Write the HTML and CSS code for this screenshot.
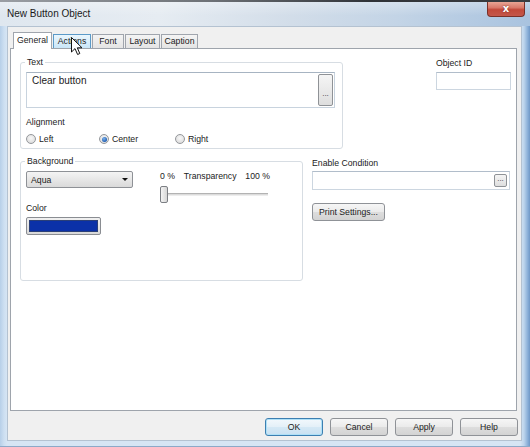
FILE: index.html
```html
<!DOCTYPE html>
<html>
<head>
<meta charset="utf-8">
<title>New Button Object</title>
<link rel="stylesheet" href="styles.css">
</head>
<body>
<div class="window">
  <div class="titlebar">
    <span class="title-text">New Button Object</span>
    <div class="close-btn"><span class="close-x">x</span></div>
  </div>
  <div class="client">
    <div class="tabs">
      <div class="tab tab--active tab--general">General</div>
      <div class="tab tab--hover tab--actions">Actions</div>
      <div class="tab tab--font">Font</div>
      <div class="tab tab--layout">Layout</div>
      <div class="tab tab--caption">Caption</div>
    </div>
    <div class="panel">
      <div class="row row--top">
        <fieldset class="group group--text">
          <legend class="group-legend">Text</legend>
          <div class="textbox">
            <span class="textbox-value">Clear button</span>
            <div class="dots-btn dots-btn--tall">...</div>
          </div>
          <div class="field-label field-label--align">Alignment</div>
          <div class="radios">
            <label class="radio"><span class="radio-dot"></span>Left</label>
            <label class="radio"><span class="radio-dot radio-dot--on"></span>Center</label>
            <label class="radio"><span class="radio-dot"></span>Right</label>
          </div>
        </fieldset>
        <div class="object-id">
          <div class="field-label field-label--id">Object ID</div>
          <div class="input input--id"></div>
        </div>
      </div>
      <div class="row row--bottom">
        <fieldset class="group group--bg">
          <legend class="group-legend">Background</legend>
          <div class="bg-cols">
            <div class="bg-left">
              <div class="combo"><span>Aqua</span><span class="combo-arrow"></span></div>
              <div class="field-label field-label--color">Color</div>
              <div class="swatch"><div class="swatch-fill"></div></div>
            </div>
            <div class="bg-right">
              <div class="trans-labels"><span>0 %</span><span>Transparency</span><span>100 %</span></div>
              <div class="slider">
                <div class="slider-track"></div>
                <div class="slider-thumb"></div>
              </div>
            </div>
          </div>
        </fieldset>
        <div class="enable">
          <div class="field-label">Enable Condition</div>
          <div class="input input--cond"><div class="dots-btn dots-btn--small">...</div></div>
          <div class="btn btn--print">Print Settings...</div>
        </div>
      </div>
    </div>
    <div class="buttons">
      <div class="btn btn--dlg btn--default">OK</div>
      <div class="btn btn--dlg">Cancel</div>
      <div class="btn btn--dlg">Apply</div>
      <div class="btn btn--dlg">Help</div>
    </div>
  </div>
  <svg class="cursor" width="13" height="19" viewBox="0 0 13 19">
    <path d="M0.5 0.5 L0.5 15 L4 11.6 L6.6 17.5 L8.8 16.5 L6.3 10.8 L11 10.8 Z" fill="#fff" stroke="#111" stroke-width="1" stroke-linejoin="round"/>
  </svg>
</div>
</body>
</html>
```

FILE: styles.css
```css
* { box-sizing: border-box; }

html, body {
  margin: 0;
  padding: 0;
  background: #fff;
}

body {
  font-family: "Liberation Sans", Arial, sans-serif;
  font-size: 8.7px;
  color: #1e1e1e;
}

/* window frame */
.window {
  position: relative;
  width: 530px;
  height: 447px;
  display: flex;
  flex-direction: column;
  background: linear-gradient(90deg, #b7cfe8 0, #cddff1 4px, #d6e5f4 7px, #d6e5f4 520px, #bcd4ec 524px, #86acd6 528px, #6f97c6 530px);
  border-bottom: 1px solid #8ca9c8;
}

.titlebar {
  height: 26px;
  flex: none;
  display: flex;
  justify-content: space-between;
  align-items: flex-start;
  padding: 0 5px 0 7px;
  background:
    linear-gradient(90deg, #9a9ea4 0, #6d7176 40%, #2f3237 70%, #3a3d42 100%) top / 100% 2px no-repeat,
    linear-gradient(180deg, rgba(255,255,255,0.35), rgba(255,255,255,0) 60%),
    linear-gradient(90deg, #dfe7ef 0, #e6ecf2 30%, #d2dde9 55%, #c3d4e6 75%, #a9c3df 100%);
}

.title-text {
  margin-top: 8px;
  font-size: 10px;
  line-height: 12px;
  color: #1a1a1a;
}

.close-btn {
  margin-top: 2px;
  width: 38px;
  height: 15px;
  border: 1px solid #7a3028;
  border-top: none;
  border-radius: 0 0 4px 4px;
  background: linear-gradient(180deg, #e9a594 0, #d9796a 40%, #c2493a 55%, #c4574a 100%);
  display: flex;
  justify-content: center;
  align-items: center;
}

.close-x {
  color: #fff;
  font-family: "DejaVu Sans", sans-serif;
  font-weight: bold;
  font-size: 10px;
  line-height: 10px;
  margin-top: -1px;
  text-shadow: 0 0 2px #7a2a20;
}

/* client area */
.client {
  flex: 1;
  margin: 0 8px 5px 7px;
  background: #f0f0f0;
  border: 1px solid #b4c2d1;
  padding: 5px 4px 0 2px;
  display: flex;
  flex-direction: column;
}

.tabs {
  display: flex;
  align-items: flex-end;
  height: 16px;
  margin-left: 3px;
}

.tab {
  height: 14px;
  line-height: 13px;
  text-align: center;
  border: 1px solid #a0a5ad;
  border-bottom: none;
  background: linear-gradient(180deg, #f4f4f4, #e4e4e4);
  margin-right: 1px;
  color: #222;
}

.tab--active {
  position: relative;
  z-index: 1;
  height: 17px;
  margin-bottom: -1px;
  line-height: 15px;
  background: #fff;
}

.tab--hover {
  background: linear-gradient(180deg, #eaf6fd, #c9e6f8);
  border-color: #5b9ac8;
}

.tab--general { width: 39px; }
.tab--actions { width: 38px; }
.tab--font { width: 32px; }
.tab--layout { width: 35px; }
.tab--caption { width: 37px; }

.panel {
  height: 363px;
  background: #fff;
  border: 1px solid #9ea4ac;
  padding: 8px 5px 0 9px;
}

.row {
  display: flex;
  align-items: flex-start;
}

.row--top {
  justify-content: space-between;
}

.row--bottom {
  margin-top: 7px;
}

/* group boxes */
.group {
  margin: 0;
  min-width: 0;
  border: 1px solid #d7dde3;
  border-radius: 3px;
}

.group-legend {
  padding: 0 2px;
  margin-left: -1px;
  line-height: 10px;
  color: #222;
}

.group--text {
  width: 323px;
  padding: 5px 7px 3px 5px;
}

.group--bg {
  width: 283px;
  padding: 5px 5px 45px 5px;
}

.field-label {
  line-height: 11px;
  color: #222;
}

.field-label--id { margin-top: 1px; }
.field-label--align { margin-top: 9px; }
.field-label--color { margin-top: 15px; }

.textbox {
  height: 36px;
  border: 1px solid #c8d3de;
  border-top-color: #a7b4c2;
  display: flex;
  justify-content: space-between;
  align-items: flex-start;
}

.textbox-value {
  font-size: 10px;
  line-height: 12px;
  padding: 2px 0 0 5px;
  color: #222;
}

.dots-btn {
  border: 1px solid #8f9296;
  border-radius: 2px;
  background: linear-gradient(180deg, #f5f5f5, #dedede);
  display: flex;
  justify-content: center;
  align-items: center;
  font-size: 8px;
  color: #333;
}

.dots-btn--tall {
  width: 15px;
  height: 32px;
  margin: 1px 1px 0 0;
  padding-top: 6px;
}

.dots-btn--small {
  width: 13px;
  height: 13px;
  margin: 2px 2px 0 auto;
  line-height: 8px;
  padding-bottom: 3px;
}

.radios {
  margin-top: 5px;
  height: 12px;
  display: grid;
  grid-template-columns: 73px 76px auto;
  align-items: center;
}

.radio {
  display: flex;
  align-items: center;
  gap: 3px;
  color: #222;
}

.radio-dot {
  width: 10px;
  height: 10px;
  border-radius: 50%;
  border: 1px solid #94979b;
  background: radial-gradient(circle at 50% 40%, #f8f8f8 0, #dcdcdc 80%);
  display: flex;
  justify-content: center;
  align-items: center;
}

.radio-dot--on::after {
  content: "";
  width: 5px;
  height: 5px;
  border-radius: 50%;
  background: radial-gradient(circle at 40% 35%, #7fb2ea 0, #1f5fb4 70%);
}

.object-id {
  width: 75px;
}

.input {
  border: 1px solid #ccd6e0;
  border-top-color: #b1bdca;
  background: #fff;
}

.input--id {
  margin-top: 3px;
  height: 18px;
}

/* background group */
.bg-cols {
  display: flex;
  gap: 27px;
}

.bg-left {
  width: 107px;
}

.combo {
  height: 17px;
  border: 1px solid #8e9196;
  border-radius: 2px;
  background: linear-gradient(180deg, #f4f4f4, #dadada);
  display: flex;
  justify-content: space-between;
  align-items: center;
  padding: 0 4px 0 4px;
  color: #222;
}

.combo-arrow {
  width: 0;
  height: 0;
  border-left: 3px solid transparent;
  border-right: 3px solid transparent;
  border-top: 3px solid #111;
}

.swatch {
  margin-top: 3px;
  width: 75px;
  height: 18px;
  border: 1px solid #8a8d92;
  border-radius: 2px;
  background: linear-gradient(180deg, #f0f0f0, #d8d8d8);
  padding: 2px;
}

.swatch-fill {
  width: 100%;
  height: 100%;
  background: #0b31a8;
  border: 1px solid #2a3f78;
}

.bg-right {
  width: 110px;
}

.trans-labels {
  display: flex;
  justify-content: space-between;
  line-height: 11px;
  color: #222;
}

.slider {
  position: relative;
  margin-top: 4px;
  height: 17px;
  width: 108px;
}

.slider-track {
  position: absolute;
  left: 0;
  right: 0;
  top: 7px;
  height: 3px;
  border-top: 1px solid #b3b3b3;
  border-bottom: 1px solid #ededed;
  background: #dcdcdc;
}

.slider-thumb {
  position: absolute;
  left: 0;
  top: 0;
  width: 8px;
  height: 17px;
  border: 1px solid #7c7f84;
  border-radius: 2px;
  background: linear-gradient(90deg, #f4f4f4, #d6d6d6);
}

/* enable condition */
.enable {
  margin-left: 9px;
  width: 198px;
  padding-top: 2px;
}

.input--cond {
  margin-top: 2px;
  height: 19px;
  display: flex;
}

/* buttons */
.btn {
  border: 1px solid #8f9297;
  border-radius: 3px;
  background: linear-gradient(180deg, #f6f6f6 0, #ebebeb 48%, #dddddd 52%, #d3d3d3 100%);
  display: flex;
  justify-content: center;
  align-items: center;
  color: #222;
}

.btn--print {
  margin-top: 13px;
  width: 73px;
  height: 18px;
}

.buttons {
  display: flex;
  justify-content: flex-end;
  gap: 7px;
  margin-top: 7px;
  margin-right: -1px;
}

.btn--dlg {
  width: 58px;
  height: 18px;
}

.btn--default {
  border-color: #3c7fb1;
  box-shadow: inset 0 0 0 1px #aee0f7;
  background: linear-gradient(180deg, #f2f8fc 0, #e4f0f8 48%, #d4e8f5 52%, #c9e1f2 100%);
}

.cursor {
  position: absolute;
  left: 71px;
  top: 37px;
}
```
